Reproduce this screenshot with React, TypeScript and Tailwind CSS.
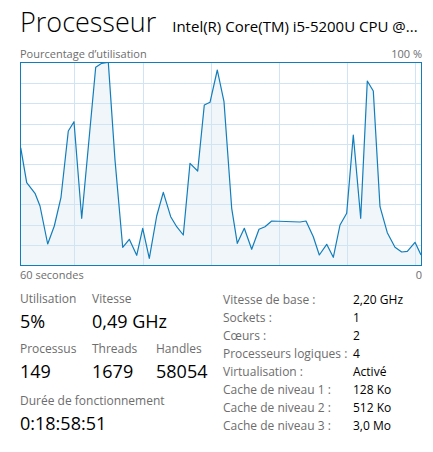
const PTS: [number, number][] = [
  [20.7, 147.7], [26.7, 182.7], [35, 193.3], [40, 206], [47.7, 244], [54.3, 226], [61, 197.3],
  [68.3, 131], [74, 121.7], [81.7, 218.3], [95.7, 67.3], [101.7, 63.3], [108.3, 62.3],
  [115, 160], [122.7, 247.3], [129.3, 239.3], [136.7, 255.3], [142.7, 228.3], [149.3, 258.3],
  [156.7, 216], [163.3, 192.3], [170.7, 216.7], [176.7, 226.7], [183.3, 235], [190, 163.3],
  [197.7, 171], [204.3, 105], [210, 102.3], [217.3, 70], [224, 101.7], [231.7, 208.3],
  [237.3, 243.3], [244.3, 228.3], [251.7, 249.3], [259, 229.3], [265, 226.7], [271.7, 221],
  [300, 222], [306, 221], [313.3, 236.7], [319.3, 255], [326.7, 244.3], [333.3, 257.3],
  [340, 225], [346.7, 213.3], [353.3, 135], [360.7, 218.3], [367.3, 81], [373.3, 91],
  [380, 206.7], [387.3, 232.7], [395, 247.3], [401.7, 252], [407.3, 251.3], [415, 242.3],
  [421, 255],
];

const OX = 21;
const OY = 63;

function Chart() {
  const pts = PTS.map(([x, y]) => `${(x - OX).toFixed(1)},${(y - OY).toFixed(1)}`).join(" ");
  const area = `0,202 ${pts} 400,202`;
  const vlines = [74, 142.7, 210.7, 278.7, 346.7, 414.7].map((x) => Math.round(x - OX));
  const hlines = [1, 2, 3, 4, 5, 6, 7, 8, 9].map((i) => Math.round(i * 20.2));
  return (
    <div className="w-[402px] h-[204px] border border-[#117dbb] bg-white">
      <svg width="400" height="202" viewBox="0 0 400 202" className="block">
        <polygon points={area} fill="#f1f6fa" />
        {vlines.map((x) => (
          <rect key={"v" + x} x={x} y={0} width={1} height={202} fill="#d0e4f3" />
        ))}
        {hlines.map((y) => (
          <rect key={"h" + y} x={0} y={y} width={400} height={1} fill="#d0e4f3" />
        ))}
        <polyline points={pts} fill="none" stroke="#117dbb" strokeWidth="1.2" strokeLinejoin="round" />
      </svg>
    </div>
  );
}

function Stat({ label, value, w }: { label: string; value: string; w?: string }) {
  return (
    <div className={w}>
      <div className="text-[12px] leading-[16px] text-[#6d6d6d]">{label}</div>
      <div className="text-[18px] leading-[24px] text-black mt-[2px]">{value}</div>
    </div>
  );
}

const SPECS: [string, string][] = [
  ["Vitesse de base :", "2,20 GHz"],
  ["Sockets :", "1"],
  ["Cœurs :", "2"],
  ["Processeurs logiques :", "4"],
  ["Virtualisation :", "Activé"],
  ["Cache de niveau 1 :", "128 Ko"],
  ["Cache de niveau 2 :", "512 Ko"],
  ["Cache de niveau 3 :", "3,0 Mo"],
];

export default function App() {
  return (
    <div
      className="w-[433px] h-[452px] bg-white overflow-hidden pl-[20px]"
      style={{ fontFamily: '"Open Sans", "Noto Sans", sans-serif' }}
    >
      {/* Header */}
      <div className="flex items-baseline w-[402px] pt-[4px] h-[46px]">
        <span className="text-[27px] leading-[36px] font-light text-black whitespace-nowrap">Processeur</span>
        <span className="ml-[16px] text-[15px] text-black whitespace-nowrap overflow-hidden">
          Intel(R) Core(TM) i5-5200U CPU @...
        </span>
      </div>
      <div className="flex justify-between w-[402px] text-[11px] leading-[16px] text-[#6d6d6d]">
        <span>Pourcentage d’utilisation</span>
        <span>100 %</span>
      </div>
      <Chart />
      <div className="flex justify-between w-[402px] text-[11px] leading-[16px] text-[#6d6d6d] mt-[1px]">
        <span>60 secondes</span>
        <span>0</span>
      </div>

      {/* Stats */}
      <div className="flex mt-[8px]">
        <div className="w-[203px] flex flex-col gap-[8px]">
          <div className="flex">
            <Stat label="Utilisation" value="5%" w="w-[72px]" />
            <Stat label="Vitesse" value="0,49 GHz" />
          </div>
          <div className="flex">
            <Stat label="Processus" value="149" w="w-[72px]" />
            <Stat label="Threads" value="1679" w="w-[64px]" />
            <Stat label="Handles" value="58054" />
          </div>
          <Stat label="Durée de fonctionnement" value="0:18:58:51" w="mt-[2px]" />
        </div>
        <div className="grid grid-cols-[130px_1fr] auto-rows-[18px] text-[12px] leading-[18px]">
          {SPECS.map(([k, v]) => (
            <div key={k} className="contents">
              <span className="text-[#6d6d6d] whitespace-nowrap">{k}</span>
              <span className="text-black whitespace-nowrap">{v}</span>
            </div>
          ))}
        </div>
      </div>
    </div>
  );
}
